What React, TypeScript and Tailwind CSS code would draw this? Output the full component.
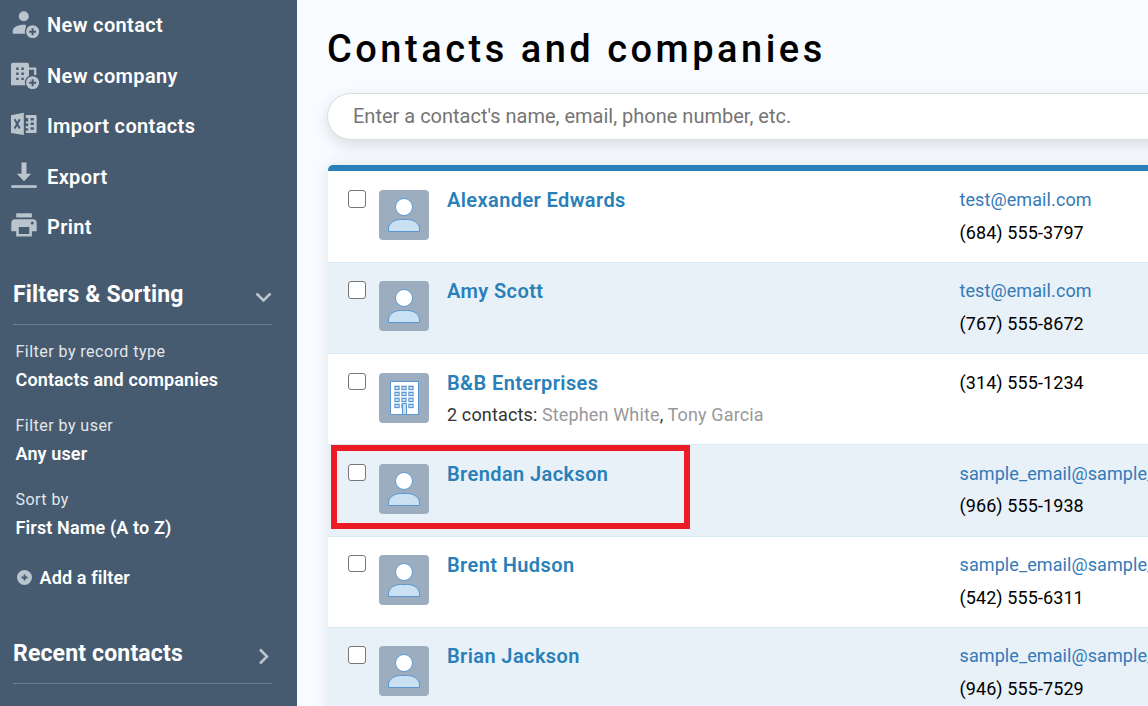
import React from "react";

type Contact = {
  name: string;
  email?: string;
  phone: string;
  company?: boolean;
  people?: string[];
  highlighted?: boolean;
};

const contacts: Contact[] = [
  { name: "Alexander Edwards", email: "test@email.com", phone: "(684) 555-3797" },
  { name: "Amy Scott", email: "test@email.com", phone: "(767) 555-8672" },
  {
    name: "B&B Enterprises",
    phone: "(314) 555-1234",
    company: true,
    people: ["Stephen White", "Tony Garcia"],
  },
  {
    name: "Brendan Jackson",
    email: "sample_email@sample_email.com",
    phone: "(966) 555-1938",
    highlighted: true,
  },
  { name: "Brent Hudson", email: "sample_email@sample_email.com", phone: "(542) 555-6311" },
  { name: "Brian Jackson", email: "sample_email@sample_email.com", phone: "(946) 555-7529" },
];

const filters = [
  { label: "Filter by record type", value: "Contacts and companies" },
  { label: "Filter by user", value: "Any user" },
  { label: "Sort by", value: "First Name (A to Z)" },
];

const PlusBadge = () => (
  <>
    <circle cx="22.6" cy="21.7" r="7.8" fill="#475b70" />
    <circle cx="22.6" cy="21.7" r="6.5" />
    <path d="M22.6 18.2v7M19.1 21.7h7" stroke="#475b70" strokeWidth="2" />
  </>
);

const NewContactIcon = () => (
  <>
    <circle cx="13.8" cy="6.3" r="5" />
    <path d="M2.7 23.7v-2.2c0-4.5 5-6.7 11.3-6.7h1.8v8.9z" />
    <PlusBadge />
  </>
);

const NewCompanyIcon = () => (
  <>
    <path
      fillRule="evenodd"
      d="M3 1.7h14a2 2 0 0 1 2 2V24.3H1V3.7a2 2 0 0 1 2-2zM6.2 6.5v2.4h2.4V6.5zm5.2 0v2.4h2.4V6.5zM6.2 11.6v2.4h2.4v-2.4zm5.2 0v2.4h2.4v-2.4zM6.2 16.7v2.4h2.4v-2.4zm5.2 0v2.4h2.4v-2.4z"
    />
    <path d="M19 7.7h6.2V14" fill="none" stroke="currentColor" strokeWidth="2.2" />
    <PlusBadge />
  </>
);

const ImportIcon = () => (
  <>
    <path d="M1 4.3 13.8 1.8v22.3L1 21.9z" />
    <path d="M4.6 8.3 9.8 17.6M9.8 8.3 4.6 17.6" stroke="#475b70" strokeWidth="2" />
    <path
      fillRule="evenodd"
      d="M15.8 4.1h9.8a1 1 0 0 1 1 1v16a1 1 0 0 1-1 1h-9.8v-2.5h2.4v-2.4h-2.4v-2.2h2.4v-2.4h-2.4v-2.2h2.4V7h-2.4zM20.6 7v2.4h3.2V7zm0 4.6v2.4h3.2v-2.4zm0 4.7v2.4h3.2v-2.4z"
    />
  </>
);

const ExportIcon = () => (
  <>
    <path d="M11.5.5h5v11.2h4.7L14 19.2l-7.2-7.5h4.7z" />
    <path d="M1.3 23.2h25.4v2.7H1.3z" />
  </>
);

const PrintIcon = () => (
  <>
    <path d="M6.2 1.3h15.7v4.1H6.2z" />
    <path
      fillRule="evenodd"
      d="M5.3 7.2h17.4a4 4 0 0 1 4 4v8h-4.8v5.4H6.2v-5.4H1.3v-8a4 4 0 0 1 4-4zM8.8 15v7h10.5v-7zM22.3 9.5a1.5 1.5 0 1 0 0 3 1.5 1.5 0 0 0 0-3z"
    />
  </>
);

const actions = [
  { label: "New contact", icon: <NewContactIcon /> },
  { label: "New company", icon: <NewCompanyIcon /> },
  { label: "Import contacts", icon: <ImportIcon /> },
  { label: "Export", icon: <ExportIcon /> },
  { label: "Print", icon: <PrintIcon /> },
];

const PersonAvatar = () => (
  <svg width="50" height="50" viewBox="0 0 50 50" className="shrink-0 rounded bg-[#9badbf]">
    <circle cx="25" cy="17" r="8.5" fill="#fff" stroke="#5b9bd5" />
    <path
      d="M9.5 41.5V39c0-5.5 5.5-9.5 12-9.5h7c6.5 0 12 4 12 9.5v2.5z"
      fill="#c9e1f3"
      stroke="#5b96d0"
    />
  </svg>
);

const CompanyAvatar = () => (
  <svg width="50" height="50" viewBox="0 0 50 50" className="shrink-0 rounded bg-[#9badbf]">
    <path d="M11.5 8.5h28v33h-28z" fill="#fff" stroke="#5b96d0" />
    {[13.5, 19.5, 25.5, 31.5].map((y) =>
      [16.5, 23.5, 30.5].map((x) => (
        <g key={`${x}-${y}`}>
          <rect x={x - 1.5} y={y - 1.5} width="6" height="5.5" fill="#c9e1f3" />
          <rect x={x - 0.5} y={y} width="4" height="3" fill="#c9e1f3" stroke="#5b96d0" />
        </g>
      ))
    )}
    <path d="M23.5 41.5v-11h4v11z" fill="#c9e1f3" stroke="#5b96d0" />
  </svg>
);

const SectionTitle = ({ title, open }: { title: string; open?: boolean }) => (
  <div className="mx-[13px] w-[259px] h-[59px] flex items-center justify-between border-b border-[#6d7d8f]">
    <h2 className="text-[23px] font-bold tracking-[0.16px]">{title}</h2>
    <svg
      width="18"
      height="18"
      viewBox="0 0 18 18"
      className="mt-[3px]"
      fill="none"
      stroke="#bac4cd"
      strokeWidth="2.6"
    >
      <path d={open ? "M2.5 5.500 9.500 12.500l7-7" : "M6 2.500l7 7-7 7"} />
    </svg>
  </div>
);

const Sidebar = () => (
  <aside className="w-[297px] shrink-0 bg-[#475b70] text-white">
    <nav className="h-[266px]">
      {actions.map((item) => (
        <a key={item.label} className="flex items-center h-[50.5px] pl-[10px]">
          <svg
            width="30"
            height="28"
            viewBox="0 0 30 28"
            fill="currentColor"
            className="-mt-[2px] shrink-0 text-[#bac4cd]"
          >
            {item.icon}
          </svg>
          <span className="ml-[7px] text-[20px] font-semibold tracking-[0.36px]">{item.label}</span>
        </a>
      ))}
    </nav>

    <SectionTitle title="Filters & Sorting" open />
    <div className="pt-[14px] pl-[15.5px]">
      {filters.map((filter) => (
        <div key={filter.label} className="h-[74px]">
          <p className="pt-px text-[16px] leading-6 tracking-[0.47px] text-[#e3e7ea]">
            {filter.label}
          </p>
          <p className="mt-[4px] text-[18px] leading-6 font-semibold tracking-[0.13px]">
            {filter.value}
          </p>
        </div>
      ))}
      <a className="mt-[4px] flex items-center h-6 pl-[1.5px] text-[18px] font-semibold tracking-[0.13px]">
        <svg width="15" height="15" viewBox="0 0 15 15" className="mr-[7.5px]">
          <circle cx="7.5" cy="7.5" r="7.5" fill="#bac4cd" />
          <path d="M7.5 4.5v6M4.5 7.5h6" stroke="#475b70" strokeWidth="1.8" />
        </svg>
        Add a filter
      </a>
    </div>
    <div className="mt-[36.4px]">
      <SectionTitle title="Recent contacts" />
    </div>
  </aside>
);

const ContactRow = ({ contact }: { contact: Contact }) => (
  <li className="relative flex h-[91.2px] first:h-[92px] pt-[18.4px] first:pt-[19px] pl-[20px] border-b border-[#dbe9f2] bg-white even:bg-[#e8f0f8]">
    <input
      type="checkbox"
      className="appearance-none shrink-0 w-[18px] h-[17.5px] rounded-[3px] border border-[#767676] bg-white"
    />
    <div className="ml-[13px]">{contact.company ? <CompanyAvatar /> : <PersonAvatar />}</div>
    <div className="ml-[18px] w-[512.5px] shrink-0">
      <p className="text-[20px] leading-5 font-semibold tracking-[0.4px] text-[#2980b9]">
        {contact.name}
      </p>
      {contact.people && (
        <p className="mt-[10px] text-[18px] leading-6 tracking-[0.14px] text-[#333]">
          {contact.people.length} contacts:{" "}
          {contact.people.map((person, i) => (
            <React.Fragment key={person}>
              {i > 0 && ", "}
              <span className="text-[#999]">{person}</span>
            </React.Fragment>
          ))}
        </p>
      )}
    </div>
    <div className="text-[18px] leading-5 tracking-[0.09px] text-black">
      {contact.email && <p className="mb-[12.6px] text-[#337ab7]">{contact.email}</p>}
      <p>{contact.phone}</p>
    </div>
    {contact.highlighted && (
      <div className="absolute left-[3px] top-0 w-[359px] h-[84px] border-6 border-[#ed1c24]" />
    )}
  </li>
);

export default function App() {
  return (
    <div className="flex w-[1148px] h-[706px] overflow-hidden bg-[#f8fbff] font-['Roboto',sans-serif]">
      <Sidebar />
      <main className="flex-1 min-w-0 overflow-hidden pl-[30px]">
        <h1 className="pt-[24px] h-[93px] text-[38px] leading-[50px] font-[480] tracking-[3.5px] whitespace-nowrap text-black">
          Contacts and companies
        </h1>
        <div className="w-[900px] h-[47px] rounded-full border border-[#dcdcdc] bg-white shadow-[0_6px_16px_rgba(0,0,0,0.12)]">
          <input
            type="text"
            placeholder="Enter a contact's name, email, phone number, etc."
            className="w-full h-full pl-[25px] pb-[2px] text-[20px] outline-none placeholder:text-[#757575]"
          />
        </div>
        <ul className="relative mt-[25px] ml-px w-[900px] overflow-hidden rounded-t-[5px] border-t-6 border-[#2980b9] shadow-[0_0_16px_rgba(0,0,0,0.1)]">
          {contacts.map((contact) => (
            <ContactRow key={contact.name} contact={contact} />
          ))}
        </ul>
      </main>
    </div>
  );
}
